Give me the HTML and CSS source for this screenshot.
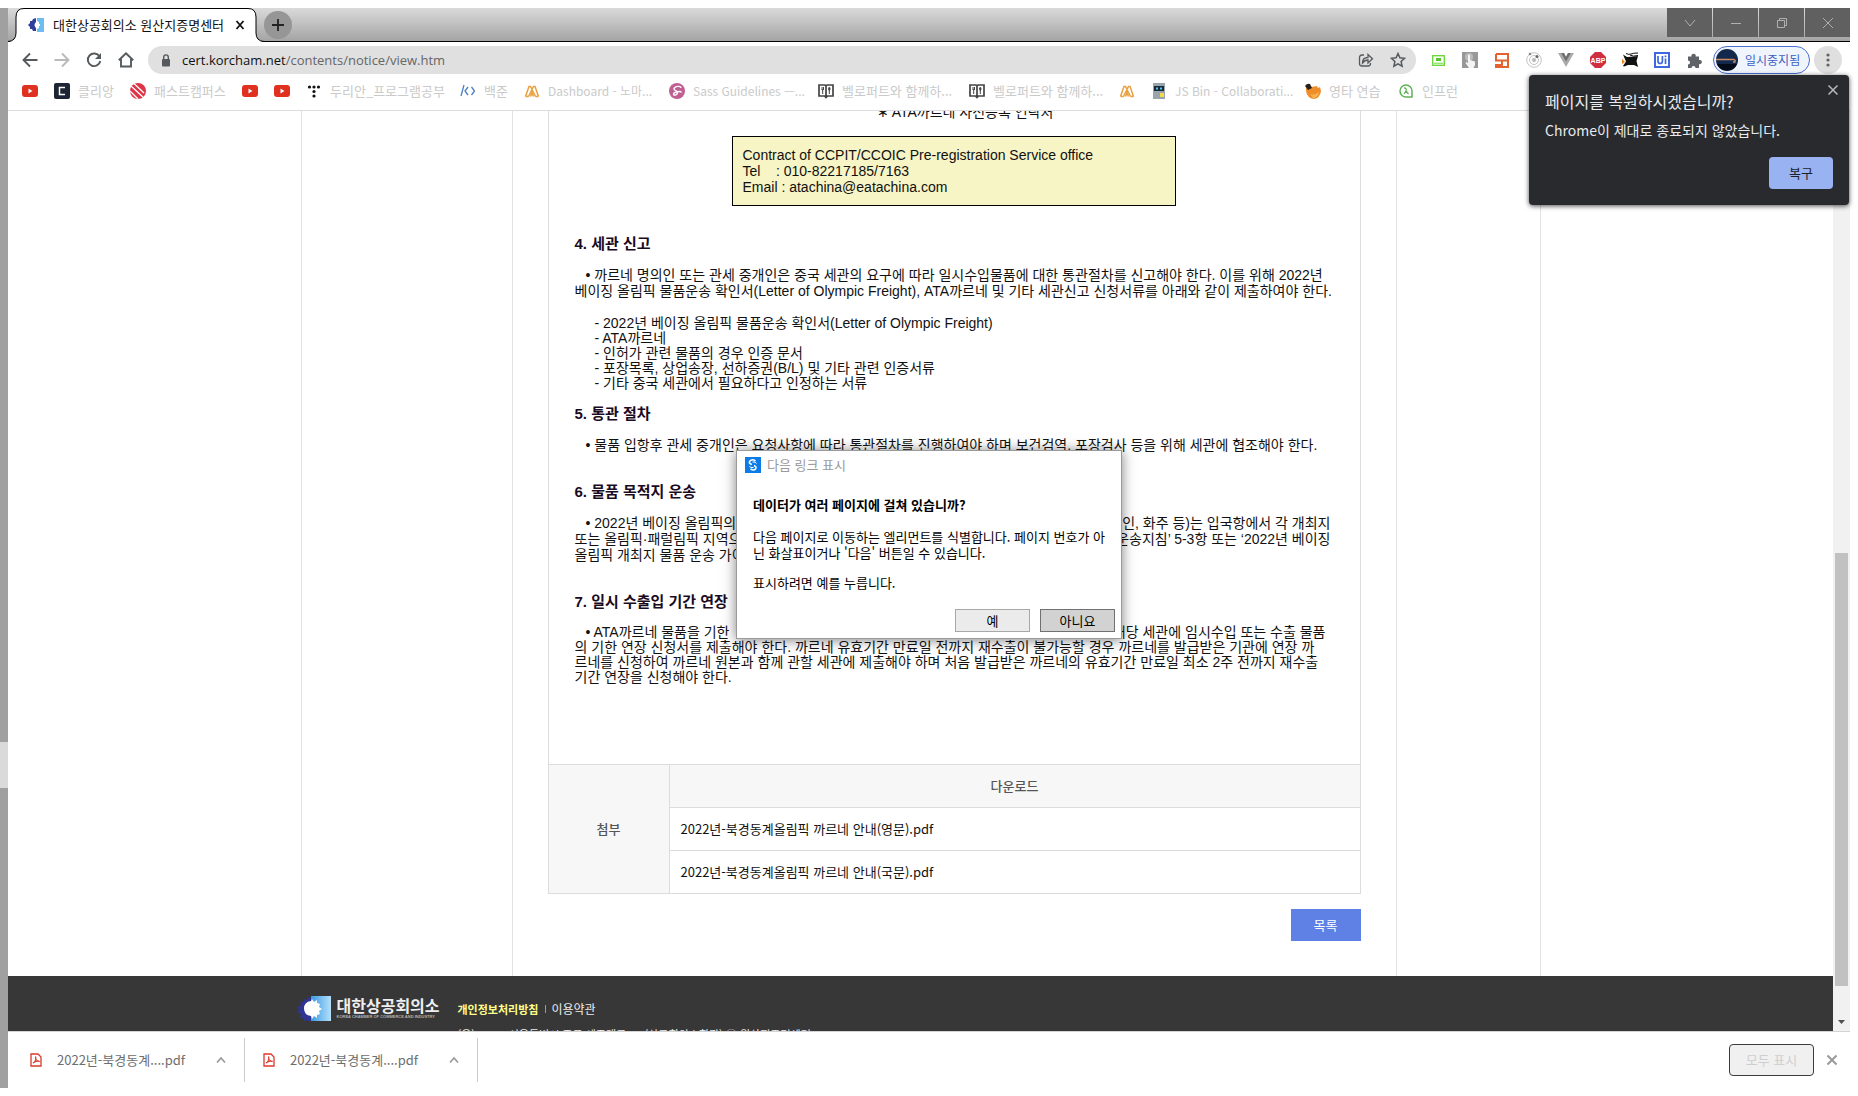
FILE: index.html
```html
<!DOCTYPE html>
<html lang="ko">
<head>
<meta charset="utf-8">
<title>대한상공회의소 원산지증명센터</title>
<link rel="stylesheet" href="styles.css">
</head>
<body>
<svg class="defs" aria-hidden="true">
  <defs>
    <linearGradient id="sky"><stop offset="0" stop-color="#3a9ae4"/><stop offset="1" stop-color="#b4e0fa"/></linearGradient>
    <symbol id="youtube" viewBox="0 0 16 16"><rect y="2" width="16" height="12" rx="3" fill="#e03020"/><path d="M6.500 5.500v5l4-2.500z" fill="#fff"/></symbol>
    <symbol id="mountain" viewBox="0 0 16 16"><path d="M1.500 13.500 5 3.500h1.500l5 10M4.500 13.500l5-10H11l3.500 10M1.500 13.500h3M11.500 13.500h3M6.500 13.500 8 10l1.500 3.500" fill="none" stroke="#e8a040" stroke-width="1.500"/></symbol>
    <symbol id="book" viewBox="0 0 16 16"><path d="M1 2h6l1 1 1-1h6v11H9.500L8 14.500 6.500 13H1zM8 3v11" fill="none" stroke="#444" stroke-width="1.700"/><path d="M4 4v3M5.500 4v3M4.700 6v5M11.300 7v4" stroke="#444"/><ellipse cx="11.300" cy="5.800" rx="1.200" ry="1.900" fill="#444"/></symbol>
    <symbol id="pdf" viewBox="0 0 12 14"><path d="M1 1h7l3 3v9H1z" fill="#fff" stroke="#d93a2b" stroke-width="1.300"/><path d="M3 10c2-1 3.500-4 2.700-6-1 1 1.300 5 3.500 4.300C7.500 7.500 4 9 3 10z" fill="none" stroke="#d93a2b" stroke-width="1.100"/></symbol>
    <symbol id="up" viewBox="0 0 12 12"><path d="M2 8.500 6 4l4 4.500" fill="none" stroke="#999" stroke-width="1.700"/></symbol>
    <symbol id="kcci" viewBox="0 0 34 25">
      <rect x="14" width="20" height="25" fill="url(#sky)"/>
      <path d="M14 2 11 1l-1 3-3-1v3H3l1 4-4 1 2 3-2 3 4 1-1 4h4v3l3-1 2 2 2-1z" fill="#2f3590"/>
      <path d="M14 5q-7 1-7 7.500t7 7.500l1 3 2-3 3 2v-3l3-1-1-3 3-2-3-2 1-3-3-1V4l-3 2-2-3z" fill="#fff"/>
    </symbol>
  </defs>
</svg>

<div class="desktop-edge"><span class="edge-light"></span></div>

<div class="browser">
  <header class="titlebar">
    <div class="tab">
      <svg class="tab-shape" viewBox="0 0 256 34" aria-hidden="true"><path d="M0 34Q8 33 8 25V9Q8 .500 16 .500H240Q248 .500 248 9v16q0 8 8 9z" fill="#fff"/><path d="M0 33.500Q8 33 8 25V9Q8 .500 16 .500H240Q248 .500 248 9v16q0 8 8 8.500" fill="none" stroke="#000"/></svg>
      <svg class="favicon" viewBox="0 0 16 14" aria-hidden="true"><path d="M8 0 5 1 4 3 2 3 2 5 0 7l2 2v2h2l1 2h3v-3q-3-3 0-6z" fill="#2f3f9a"/><path d="M9 0h7v14H9v-3l2-1V8h1V6h-1V4L9 3z" fill="#6cbdf2"/></svg>
      <span class="tab-title">대한상공회의소 원산지증명센터</span>
      <button class="bare tab-close" aria-label="탭 닫기"><svg width="10" height="10" viewBox="0 0 10 10"><path d="M1.500 1 8.500 9M8.500 1 1.500 9" stroke="#111" stroke-width="1.800"/></svg></button>
    </div>
    <button class="new-tab" aria-label="새 탭"><svg width="12" height="12" viewBox="0 0 12 12"><path d="M6 0v12M0 6h12" stroke="#222" stroke-width="1.800"/></svg></button>
    <div class="caption">
      <button aria-label="탭 검색"><svg width="12" height="12" viewBox="0 0 12 12"><path d="m1 3 5 6 5-6"/></svg></button>
      <button aria-label="최소화"><svg width="12" height="12" viewBox="0 0 12 12"><path d="M1 6.500h10"/></svg></button>
      <button aria-label="이전 크기로"><svg width="12" height="12" viewBox="0 0 12 12"><path d="M1.500 3.500h7v7h-7zM3.500 3.500v-2h7v7h-2"/></svg></button>
      <button aria-label="닫기"><svg width="12" height="12" viewBox="0 0 12 12"><path d="m1 1 10 10M11 1 1 11"/></svg></button>
    </div>
  </header>

  <nav class="toolbar">
    <button class="bare tool" aria-label="뒤로"><svg width="16" height="16" viewBox="0 0 16 16"><path d="M15.500 8H2M8 1.500 1.500 8 8 14.500" fill="none" stroke="#555a5e" stroke-width="1.900"/></svg></button>
    <button class="bare tool" aria-label="앞으로"><svg width="16" height="16" viewBox="0 0 16 16"><path d="M.500 8H14M8 1.500 14.500 8 8 14.500" fill="none" stroke="#b8babc" stroke-width="1.900"/></svg></button>
    <button class="bare tool" aria-label="새로고침"><svg width="16" height="16" viewBox="0 0 16 16"><path d="M13.500 4.500A6.300 6.300 0 1 0 14.300 9" fill="none" stroke="#555a5e" stroke-width="1.900"/><path d="M15 1v6H9z" fill="#555a5e"/></svg></button>
    <button class="bare tool" aria-label="홈"><svg width="16" height="16" viewBox="0 0 16 16"><path d="M.800 8.300 8 1.300l7.200 7M3 7v7.500h10V7" fill="none" stroke="#555a5e" stroke-width="1.900"/></svg></button>
    <div class="omnibox">
      <svg width="10" height="13" viewBox="0 0 10 13" aria-hidden="true"><rect x="1" y="5" width="8" height="7.500" rx="1" fill="#55585c"/><path d="M2.700 5.500V3.200a2.300 2.300 0 0 1 4.600 0v2.300" fill="none" stroke="#55585c" stroke-width="1.400"/></svg>
      <span class="url"><b>cert.korcham.net</b>/contents/notice/view.htm</span>
      <button class="bare tool" aria-label="공유"><svg width="16" height="16" viewBox="0 0 16 16" fill="none" stroke="#555a5e" stroke-width="1.300"><path d="M6 3H4Q1.500 3 1.500 5.500v6Q1.500 14 4 14h6q2.500 0 2.500-2.500V11"/><path d="M4.500 11C4.500 7 7 5.500 10 5.500V2.500l4.500 4.200L10 11V8C7.500 8 6 9 4.500 11z"/></svg></button>
      <button class="bare tool" aria-label="북마크"><svg width="16" height="16" viewBox="0 0 16 16"><path d="m8 1.500 1.900 4.300 4.700.500-3.500 3.200 1 4.700L8 11.800l-4.100 2.400 1-4.700L1.400 6.300l4.700-.500z" fill="none" stroke="#555a5e" stroke-width="1.500"/></svg></button>
    </div>
    <div class="extensions">
      <button class="bare tool" aria-label="확장 1"><svg width="13" height="11" viewBox="0 0 13 11"><rect x=".700" y=".700" width="11.600" height="9.600" fill="#fff" stroke="#6fd840" stroke-width="1.400"/><path d="M4 3h5v3H4z" fill="#56c72b"/><path d="M2 8.200h9" stroke="#6fd840"/></svg></button>
      <button class="bare tool" aria-label="확장 2"><svg width="16" height="16" viewBox="0 0 16 16"><rect width="16" height="16" fill="#989898"/><circle cx="7" cy="5" r="4" fill="#bbb"/><path d="M6 3q1.500-1 2 0v5l5 1.500V13l-1.500 3H7l-3.500-5 1-1L6 11z" fill="#f4f4f4"/></svg></button>
      <button class="bare tool" aria-label="확장 3"><svg width="14" height="15" viewBox="0 0 14 15"><path d="M1 1h12v13H7V8M1 1v6.500h12M1 7.500" fill="none" stroke="#e2632f" stroke-width="2"/><path d="M0 11h6v4H0z" fill="#e2632f"/></svg></button>
      <button class="bare tool" aria-label="확장 4"><svg width="16" height="16" viewBox="0 0 16 16" fill="none" stroke="#c3c3c3"><circle cx="8" cy="8" r="7.300"/><circle cx="8" cy="8" r="4.500"/><circle cx="8" cy="8" r="1.800" fill="#bbb"/><circle cx="11" cy="4.500" r="1.500" fill="#666" stroke="none"/><circle cx="4" cy="2" r="1.300" fill="#888" stroke="none"/></svg></button>
      <button class="bare tool" aria-label="Vue"><svg width="16" height="14" viewBox="0 0 16 14"><path d="M0 0h6l2 4 2-4h6L8 14z" fill="#aaa"/><path d="M3.200 0H6l2 4 2-4h2.800L8 8.500z" fill="#6d6d6d"/></svg></button>
      <button class="bare tool" aria-label="ABP"><svg width="16" height="16" viewBox="0 0 16 16"><path d="M5 0h6l5 5v6l-5 5H5l-5-5V5z" fill="#cf2f40"/><text x="8" y="11" class="abp">ABP</text></svg></button>
      <button class="bare tool" aria-label="확장 5"><svg width="17" height="16" viewBox="0 0 17 16"><path d="M1 2.500 5 5l7-.500 4-.500-1.500 5 1.500 6-4-2H6l-4 1.500L1 14l3-4.500z" fill="#111"/><path d="M4 1.500Q7 3 9 2t7-1M8 3q3 2 8 .500" fill="none" stroke="#111"/><path d="M0 6.500 3 10l-3 2z" fill="#ee8a25"/></svg></button>
      <button class="bare tool" aria-label="UiPath"><svg width="16" height="16" viewBox="0 0 16 16"><rect x="1" y="1" width="14" height="14" fill="#fff" stroke="#3f68df" stroke-width="2"/><path d="M4 4v5q0 2.500 2.200 2.500T8.400 9V4M11.500 6.500v5.500M11.500 3.500v1.700" fill="none" stroke="#3f68df" stroke-width="1.700"/></svg></button>
      <button class="bare tool" aria-label="확장 프로그램"><svg width="15" height="15" viewBox="0 0 15 15"><path d="M1 3.500h3.500a2.200 2.200 0 1 1 4.200 0H12V7a2.200 2.200 0 1 1 0 4.200V15H8.500a2 2 0 0 0-4 0H1v-3.500a2 2 0 0 0 0-4z" fill="#5f6368"/></svg></button>
    </div>
    <button class="profile"><svg width="22" height="22" viewBox="0 0 22 22" aria-hidden="true"><circle cx="11" cy="11" r="11" fill="#12284c"/><path d="M1 15a11 11 0 0 0 20 0z" fill="#050b18"/><path d="M0 10.500h17q3 0 2 2.500h-2" fill="none" stroke="#c98a63" stroke-width="1.300"/></svg><span>일시중지됨</span></button>
    <button class="menu" aria-label="메뉴"><svg width="4" height="14" viewBox="0 0 4 14" fill="#5f6368"><circle cx="2" cy="2" r="1.600"/><circle cx="2" cy="7" r="1.600"/><circle cx="2" cy="12" r="1.600"/></svg></button>
  </nav>

  <nav class="bookmarks">
    <a href="#" aria-label="YouTube"><svg><use href="#youtube"/></svg></a>
    <a href="#"><svg viewBox="0 0 16 16"><rect width="16" height="16" rx="2" fill="#1d2433"/><path d="M11 4.500H5.500v7H11" fill="none" stroke="#fff" stroke-width="1.500"/></svg>클리앙</a>
    <a href="#"><svg viewBox="0 0 16 16"><circle cx="8" cy="8" r="8" fill="#df3348"/><path d="m1 3 13 12M4 .500 14 10M0 8l8 8" stroke="#fff" stroke-width="1.300"/></svg>패스트캠퍼스</a>
    <a href="#" aria-label="YouTube"><svg><use href="#youtube"/></svg></a>
    <a href="#" aria-label="YouTube"><svg><use href="#youtube"/></svg></a>
    <a href="#"><svg viewBox="0 0 16 16"><g fill="#111"><circle cx="3.500" cy="4" r="1.600"/><circle cx="8" cy="4" r="1.600"/><circle cx="12.500" cy="4" r="1.600"/><circle cx="8" cy="8.500" r="1.600"/><circle cx="8" cy="13" r="1.600"/></g></svg>두리안_프로그램공부</a>
    <a href="#"><svg viewBox="0 0 16 16"><path d="M4 2 1 13M8 4 5 8l3 4M11.500 4l3 4-3 4" fill="none" stroke="#4b80c2" stroke-width="1.300"/></svg>백준</a>
    <a href="#" class="latin"><svg><use href="#mountain"/></svg>Dashboard - 노마...</a>
    <a href="#" class="latin"><svg viewBox="0 0 16 16"><circle cx="8" cy="8" r="8" fill="#bf5f92"/><path d="M12 5c0-3-7-1.500-7 1 0 2 4 1.500 3.500 4S4 13 4.500 11s7-3.500 8-1.500" fill="none" stroke="#fff" stroke-width="1.300"/></svg>Sass Guidelines —...</a>
    <a href="#"><svg><use href="#book"/></svg>벨로퍼트와 함께하...</a>
    <a href="#"><svg><use href="#book"/></svg>벨로퍼트와 함께하...</a>
    <a href="#" aria-label="Dashboard"><svg><use href="#mountain"/></svg></a>
    <a href="#" class="latin"><svg viewBox="0 0 16 16"><rect x="2" width="12" height="16" fill="#9aa4ab"/><rect x="3" y="3" width="10" height="5" fill="#182a38"/><path d="M5 5.500h2M9 5.500h2" stroke="#5bc8f5" stroke-width="2"/><rect x="9" y="10" width="4" height="4" fill="#f3d94b"/></svg>JS Bin - Collaborati...</a>
    <a href="#"><svg viewBox="0 0 16 16"><path d="M1 5 6 4l6-1 1 2 2-1 1 4q-1 7-7 8-7-1-8-8z" fill="#ef8d2b"/><path d="M0 3q2-3 5-2l2 4-4 2z" fill="#2a2018"/><path d="M5 11q4 2 9-2-1 6-6 6z" fill="#f8b34c"/></svg>영타 연습</a>
    <a href="#"><svg viewBox="0 0 16 16"><path d="M14 14H8a6 6 0 1 1 6-6z" fill="none" stroke="#63b25a" stroke-width="1.500"/><path d="M6 5q3 0 2 3l2.500 3M8 8l-2 3" fill="none" stroke="#63b25a" stroke-width="1.300"/></svg>인프런</a>
  </nav>

  <div class="viewport">
    <div class="page">
      <main class="outer">
        <div class="inner">
          <article class="notice">
            <p class="contact-title">∗ ATA까르네 사전등록 연락처</p>
            <div class="contact">
              <p>Contract of CCPIT/CCOIC Pre-registration Service office</p>
              <p>Tel &nbsp;&nbsp; : 010-82217185/7163</p>
              <p>Email : atachina@eatachina.com</p>
            </div>

            <h3>4. 세관 신고</h3>
            <p><span class="line first">• 까르네 명의인 또는 관세 중개인은 중국 세관의 요구에 따라 일시수입물품에 대한 통관절차를 신고해야 한다. 이를 위해 2022년</span>
            <span class="line">베이징 올림픽 물품운송 확인서(Letter of Olympic Freight), ATA까르네 및 기타 세관신고 신청서류를 아래와 같이 제출하여야 한다.</span></p>
            <ul>
              <li>- 2022년 베이징 올림픽 물품운송 확인서(Letter of Olympic Freight)</li>
              <li>- ATA까르네</li>
              <li>- 인허가 관련 물품의 경우 인증 문서</li>
              <li>- 포장목록, 상업송장, 선하증권(B/L) 및 기타 관련 인증서류</li>
              <li>- 기타 중국 세관에서 필요하다고 인정하는 서류</li>
            </ul>

            <h3 class="after-list">5. 통관 절차</h3>
            <p><span class="line first">• 물품 입항후 관세 중개인은 요청사항에 따라 통관절차를 진행하여야 하며 보건검역, 포장검사 등을 위해 세관에 협조해야 한다.</span></p>

            <h3>6. 물품 목적지 운송</h3>
            <p><span class="line first split"><span>• 2022년 베이징 올림픽의</span><span>인, 화주 등)는 입국항에서 각 개최지</span></span>
            <span class="line split"><span>또는 올림픽·패럴림픽 지역으</span><span>운송지침’ 5-3항 또는 ‘2022년 베이징</span></span>
            <span class="line">올림픽 개최지 물품 운송 가이</span></p>

            <h3>7. 일시 수출입 기간 연장</h3>
            <p class="dense"><span class="line first split"><span>• ATA까르네 물품을 기한</span><span>해당 세관에 임시수입 또는 수출 물품</span></span>
            <span class="line">의 기한 연장 신청서를 제출해야 한다. 까르네 유효기간 만료일 전까지 재수출이 불가능할 경우 까르네를 발급받은 기관에 연장 까</span>
            <span class="line">르네를 신청하여 까르네 원본과 함께 관할 세관에 제출해야 하며 처음 발급받은 까르네의 유효기간 만료일 최소 2주 전까지 재수출</span>
            <span class="line">기간 연장을 신청해야 한다.</span></p>
          </article>

          <table>
            <tbody>
              <tr><th rowspan="3" class="side" scope="rowgroup">첨부</th><th scope="col">다운로드</th></tr>
              <tr><td><a href="#">2022년-북경동계올림픽 까르네 안내(영문).pdf</a></td></tr>
              <tr><td><a href="#">2022년-북경동계올림픽 까르네 안내(국문).pdf</a></td></tr>
            </tbody>
          </table>
          <div class="actions"><button class="list-button">목록</button></div>
        </div>
      </main>

      <footer class="site-footer">
        <div class="footer-row">
          <svg width="34" height="25" aria-hidden="true"><use href="#kcci"/></svg>
          <div class="brand"><strong>대한상공회의소</strong><small>KOREA CHAMBER OF COMMERCE AND INDUSTRY</small></div>
          <div class="legal">
            <div class="legal-links"><a href="#" class="privacy">개인정보처리방침</a><i></i><a href="#">이용약관</a></div>
            <address>(우)04513 서울특별시 중구 세종대로 39 (상공회의소회관) ⓒ 원산지증명센터</address>
          </div>
        </div>
      </footer>
    </div>
    <div class="scrollbar" aria-hidden="true"><span class="thumb"></span><svg width="7" height="4" viewBox="0 0 7 4"><path d="M0 0h7L3.500 4z" fill="#505050"/></svg></div>
  </div>

  <footer class="downloads">
    <div class="download"><svg width="12" height="14" aria-hidden="true"><use href="#pdf"/></svg><span>2022년-북경동계....pdf</span><button class="bare" aria-label="옵션"><svg width="12" height="12"><use href="#up"/></svg></button></div>
    <div class="download"><svg width="12" height="14" aria-hidden="true"><use href="#pdf"/></svg><span>2022년-북경동계....pdf</span><button class="bare" aria-label="옵션"><svg width="12" height="12"><use href="#up"/></svg></button></div>
    <button class="show-all">모두 표시</button>
    <button class="bare close-bar" aria-label="닫기"><svg width="12" height="12" viewBox="0 0 12 12"><path d="m1.500 1.500 9 9M10.500 1.500l-9 9" stroke="#999" stroke-width="2"/></svg></button>
  </footer>

  <section class="bubble" role="alertdialog" aria-labelledby="restore-title">
    <button class="bare bubble-close" aria-label="닫기"><svg width="10" height="10" viewBox="0 0 10 10"><path d="m.500.500 9 9M9.500.500l-9 9" stroke="#b5b8bc" stroke-width="1.500"/></svg></button>
    <h2 id="restore-title">페이지를 복원하시겠습니까?</h2>
    <p>Chrome이 제대로 종료되지 않았습니다.</p>
    <button class="restore">복구</button>
  </section>
</div>

<section class="dialog" role="dialog" aria-labelledby="dialog-title">
  <header><svg width="16" height="16" viewBox="0 0 16 16" aria-hidden="true"><rect width="16" height="16" fill="#0b7be8"/><path d="M10.500 4Q7 1.500 5 4t2 3.500M9 8.500q3 1.500 1.500 3.500T5.500 12" fill="none" stroke="#fff" stroke-width="1.600"/><path d="M7.500 5q3-.500 4 1.500M4.500 9.500Q5.500 11 8.500 10.500" fill="none" stroke="#fff"/></svg><span id="dialog-title">다음 링크 표시</span></header>
  <h2>데이터가 여러 페이지에 걸쳐 있습니까?</h2>
  <p>다음 페이지로 이동하는 엘리먼트를 식별합니다. 페이지 번호가 아<br>닌 화살표이거나 '다음' 버튼일 수 있습니다.</p>
  <p>표시하려면 예를 누릅니다.</p>
  <div class="dialog-buttons"><button>예</button><button class="default">아니요</button></div>
</section>
</body>
</html>
```
FILE: styles.css
```css
* { box-sizing: border-box; }

body {
  margin: 0;
  padding: 8px 8px 8px 0;
  height: 100vh;
  display: flex;
  overflow: hidden;
  background: #fff;
  font-family: "Noto Sans CJK KR", sans-serif;
  font-size: 13px;
  line-height: 16px;
  color: #111;
}

h2, h3, p, ul { margin: 0; padding: 0; font-size: inherit; }
ul { list-style: none; }
a { color: inherit; text-decoration: none; }
button { font: inherit; color: inherit; padding: 0; }
svg { display: block; flex: none; }
.defs { position: absolute; width: 0; height: 0; }
.bare {
  display: flex;
  align-items: center;
  justify-content: center;
  border: 0;
  background: none;
}

.desktop-edge {
  flex: none;
  width: 8px;
  background: #a0a0a0;
  padding-top: 734px;
}
.edge-light { display: block; height: 46px; background: #dadada; }

.browser {
  flex: 1;
  min-width: 0;
  display: flex;
  flex-direction: column;
  position: relative;
}

/* Title bar */
.titlebar {
  display: flex;
  height: 34px;
  flex: none;
  background: linear-gradient(#dadada, #a4a4a4);
  border-bottom: 1px solid #000;
}
.tab {
  position: relative;
  display: flex;
  align-items: center;
  width: 256px;
  height: 34px;
  padding: 0 19px 0 20px;
}
.tab-shape { position: absolute; left: 0; top: 0; width: 256px; height: 34px; }
.favicon { position: relative; width: 16px; height: 14px; }
.tab-title { position: relative; flex: 1; padding-left: 9px; white-space: nowrap; }
.tab-close { position: relative; }
.new-tab {
  display: flex;
  align-items: center;
  justify-content: center;
  width: 28px;
  height: 28px;
  margin: 3px 0 0;
  border: 0;
  border-radius: 50%;
  background: #969696;
}
.caption { display: flex; gap: 1px; margin-left: auto; height: 29px; }
.caption button {
  display: flex;
  align-items: center;
  justify-content: center;
  width: 45px;
  border: 0;
  background: #606060;
}
.caption path { fill: none; stroke: #b0b0b0; }

/* Toolbar */
.toolbar {
  display: flex;
  align-items: center;
  flex: none;
  height: 36px;
  padding: 0 8px 0 6px;
}
.tool { width: 32px; height: 28px; flex: none; }
.omnibox {
  flex: 1;
  display: flex;
  align-items: center;
  height: 28px;
  margin: 0 6px;
  padding: 0 2px 0 13px;
  border-radius: 14px;
  background: #e0e0e0;
}
.url {
  flex: 1;
  padding-left: 11px;
  font-family: "Open Sans", sans-serif;
  color: #666;
}
.url b { font-weight: 400; color: #111; }
.extensions { display: flex; }
.abp { font: 700 7px "Liberation Sans", sans-serif; fill: #fff; text-anchor: middle; }
.profile {
  display: flex;
  align-items: center;
  gap: 7px;
  width: 97px;
  height: 28px;
  margin: 0 4px 0 3px;
  padding-left: 2px;
  border: 1px solid #4a6fd0;
  border-radius: 14px;
  background: #f0f5fd;
  color: #3c5fc4;
  font-size: 12px;
}
.menu {
  display: flex;
  align-items: center;
  justify-content: center;
  width: 28px;
  height: 28px;
  border: 0;
  border-radius: 50%;
  background: #dfdfdf;
}

/* Bookmarks: one column per site */
.bookmarks {
  display: grid;
  grid-template-columns: 32px 76px 112px 32px 32px 154px 64px 145px 149px 151px 150px 32px 154px 93px 1fr;
  flex: none;
  height: 33px;
  padding: 5px 0 0 14px;
  border-bottom: 1px solid #dcdcdc;
  color: #cacaca;
}
.bookmarks a { display: flex; gap: 8px; height: 16px; white-space: nowrap; }
.bookmarks .latin { font-size: 12px; }
.bookmarks svg { width: 16px; height: 16px; }

/* Page area */
.viewport { flex: 1; min-height: 0; display: flex; overflow: hidden; }
.page { flex: 1; min-width: 0; height: 100%; overflow: hidden; }
.outer {
  width: 1240px;
  margin: 0 auto;
  padding: 0 143px 0 210px;
  border: solid #e2e2e2;
  border-width: 0 1px;
}
.inner {
  padding: 0 35px 35px;
  border: solid #e2e2e2;
  border-width: 0 1px;
}
.notice {
  padding: 0 24px 79px 26px;
  border: solid #dcdcdc;
  border-width: 0 1px;
  font-family: "Liberation Sans", "Noto Sans CJK KR", sans-serif;
  font-size: 14px;
}
.contact-title { margin-top: -7px; padding-left: 20px; text-align: center; }
.contact {
  width: 444px;
  height: 70px;
  margin: 16px 0 0 157px;
  padding: 10px;
  border: 1px solid #000;
  background: #f7f4c5;
}
.notice h3 { margin: 31px 0 15px; font-size: 15px; color: #1a0a22; }
.notice .contact + h3 { margin-top: 30px; }
.notice h3.after-list { margin-top: 15px; }
.notice ul { margin-top: 17px; padding-left: 20px; line-height: 15px; }
.dense { line-height: 15px; }
.line { display: block; white-space: nowrap; }
.first { padding-left: 11px; }
.split { display: flex; justify-content: space-between; padding-right: 5px; }
.dense .split { padding-right: 10px; }

table {
  width: 100%;
  border-collapse: collapse;
  border: 1px solid #dcdcdc;
}
th, td { height: 43px; padding: 0 11px; border: 1px solid #dcdcdc; text-align: left; }
th { background: #f7f7f7; color: #555; font-weight: 500; text-align: center; }
.side { width: 121px; }
.actions { display: flex; justify-content: flex-end; padding-top: 15px; }
.list-button {
  width: 70px;
  height: 32px;
  border: 0;
  background: #5f80e5;
  color: #fff;
}

.site-footer { background: #373737; color: #eee; }
.footer-row { display: flex; width: 1248px; margin: 0 auto; padding: 20px 0 30px; }
.brand { width: 106px; margin-left: 6px; }
.brand strong { display: block; font-size: 16px; line-height: 18px; white-space: nowrap; }
.brand small {
  display: block;
  font: 700 4px/6px "Liberation Sans", sans-serif;
  color: #b0b0b0;
  white-space: nowrap;
}
.legal { margin-left: 15px; padding-top: 5px; font-size: 12px; }
.legal-links { display: flex; align-items: center; }
.legal-links i { width: 1px; height: 8px; margin: 0 5px 0 7px; background: #999; }
.privacy { font-size: 11px; font-weight: 700; color: #ffff8c; }
address { margin-top: 9px; font-size: 11px; font-style: normal; white-space: nowrap; }

.scrollbar {
  flex: none;
  display: flex;
  flex-direction: column;
  align-items: center;
  justify-content: flex-end;
  width: 17px;
  padding-bottom: 7px;
  background: #f1f1f1;
}
.thumb { width: 13px; height: 433px; margin-bottom: 34px; background: #c1c1c1; }

/* Downloads */
.downloads {
  display: flex;
  align-items: center;
  flex: none;
  height: 57px;
  padding: 0 12px 0 4px;
  border-top: 1px solid #d5d2d5;
  color: #6e6e6e;
}
.download {
  display: flex;
  align-items: center;
  width: 233px;
  height: 44px;
  padding: 0 17px 0 18px;
  border-right: 1px solid #ccc;
}
.download span { flex: 1; padding-left: 15px; }
.show-all {
  width: 85px;
  height: 32px;
  margin: 0 12px 0 auto;
  border: 1px solid #3c3c3c;
  border-radius: 4px;
  background: #f0f0f0;
  color: #d0cdd0;
}

/* Restore bubble */
.bubble {
  position: absolute;
  top: 67px;
  right: 1px;
  width: 320px;
  padding: 16px;
  border-radius: 4px;
  background: #292a2d;
  color: #e8eaed;
  font-size: 14px;
  box-shadow: 0 1px 5px rgba(0, 0, 0, .7);
}
.bubble h2 { font-size: 16px; font-weight: 400; line-height: 20px; }
.bubble p { margin: 10px 0 18px; line-height: 18px; }
.bubble-close { position: absolute; top: 10px; right: 11px; }
.restore {
  display: block;
  width: 64px;
  height: 32px;
  margin-left: auto;
  border: 0;
  border-radius: 4px;
  background: #98b2f2;
  color: #202124;
  font-size: 13px;
}

/* Link dialog */
.dialog {
  position: absolute;
  left: 736px;
  top: 450px;
  width: 386px;
  height: 189px;
  padding: 6px 6px 6px 16px;
  border: 1px solid #9a9a9a;
  background: #fff;
  color: #000;
  box-shadow: 0 1px 12px rgba(0, 0, 0, .5);
  white-space: nowrap;
}
.dialog header { display: flex; gap: 6px; margin-left: -8px; color: #999; }
.dialog h2 { margin: 24px 0 16px; }
.dialog p { margin-bottom: 14px; }
.dialog-buttons { display: flex; justify-content: flex-end; gap: 10px; padding-top: 4px; }
.dialog-buttons button {
  width: 75px;
  height: 23px;
  border: 1px solid #a8a8a8;
  background: #ebebeb;
}
.dialog-buttons .default { border-color: #707070; background: #d2d2d2; }
```
